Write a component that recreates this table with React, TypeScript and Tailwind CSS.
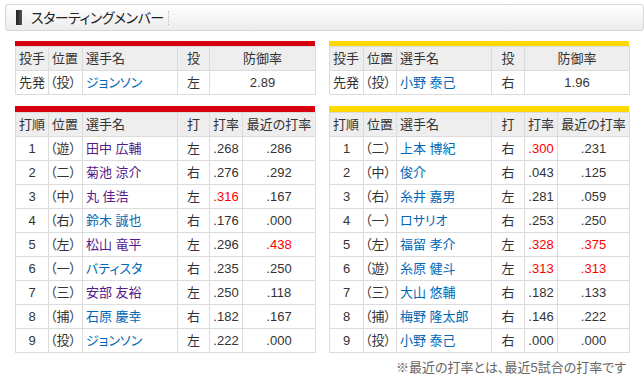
const FONT = "[font-family:'Liberation_Sans','Noto_Sans_CJK_JP',sans-serif] [font-feature-settings:'palt']";

type Batter = [string, string, string, string, string, string, boolean, boolean, boolean];

// order, pos, name, hand, avg, recent, avgRed, recentRed, visited
const carp: Batter[] = [
  ['1', '（遊）', '田中 広輔', '左', '.268', '.286', false, false, true],
  ['2', '（二）', '菊池 涼介', '右', '.276', '.292', false, false, true],
  ['3', '（中）', '丸 佳浩', '左', '.316', '.167', true, false, true],
  ['4', '（右）', '鈴木 誠也', '右', '.176', '.000', false, false, false],
  ['5', '（左）', '松山 竜平', '左', '.296', '.438', false, true, true],
  ['6', '（一）', 'バティスタ', '右', '.235', '.250', false, false, false],
  ['7', '（三）', '安部 友裕', '左', '.250', '.118', false, false, true],
  ['8', '（捕）', '石原 慶幸', '右', '.182', '.167', false, false, false],
  ['9', '（投）', 'ジョンソン', '左', '.222', '.000', false, false, false],
];

const tigers: Batter[] = [
  ['1', '（二）', '上本 博紀', '右', '.300', '.231', true, false, false],
  ['2', '（中）', '俊介', '右', '.043', '.125', false, false, false],
  ['3', '（右）', '糸井 嘉男', '左', '.281', '.059', false, false, false],
  ['4', '（一）', 'ロサリオ', '右', '.253', '.250', false, false, false],
  ['5', '（左）', '福留 孝介', '左', '.328', '.375', true, true, false],
  ['6', '（遊）', '糸原 健斗', '左', '.313', '.313', true, true, false],
  ['7', '（三）', '大山 悠輔', '右', '.182', '.133', false, false, false],
  ['8', '（捕）', '梅野 隆太郎', '右', '.146', '.222', false, false, false],
  ['9', '（投）', '小野 泰己', '右', '.000', '.000', false, false, false],
];

const th = 'border border-[#dcdcdc] bg-[#eeeeee] h-[24px] px-[3px] font-normal text-left';
const td = 'border border-[#dcdcdc] bg-white h-[24px] px-[3px]';

function PitcherTable({ bar, cols, name, hand, era }: { bar: string; cols: number[]; name: string; hand: string; era: string }) {
  return (
    <div className="w-[300px]">
      <div className={`h-[5px] ${bar}`} />
      <table className="w-full table-fixed border-collapse">
        <colgroup>
          {cols.map((w, i) => (
            <col key={i} style={{ width: w }} />
          ))}
        </colgroup>
        <thead>
          <tr>
            <th className={th}>投手</th>
            <th className={th}>位置</th>
            <th className={th}>選手名</th>
            <th className={`${th} !text-center`}>投</th>
            <th className={`${th} !text-center`}>防御率</th>
          </tr>
        </thead>
        <tbody>
          <tr>
            <td className={td}>先発</td>
            <td className={`${td} !px-[1px]`}>（投）</td>
            <td className={`${td} text-[#0068b7]`}>{name}</td>
            <td className={`${td} text-center`}>{hand}</td>
            <td className={`${td} text-center`}>{era}</td>
          </tr>
        </tbody>
      </table>
    </div>
  );
}

function BattingTable({ bar, cols, rows }: { bar: string; cols: number[]; rows: Batter[] }) {
  return (
    <div className="w-[300px]">
      <div className={`h-[6px] ${bar}`} />
      <table className="w-full table-fixed border-collapse">
        <colgroup>
          {cols.map((w, i) => (
            <col key={i} style={{ width: w }} />
          ))}
        </colgroup>
        <thead>
          <tr>
            <th className={th}>打順</th>
            <th className={th}>位置</th>
            <th className={th}>選手名</th>
            <th className={`${th} !text-center`}>打</th>
            <th className={`${th} !text-center`}>打率</th>
            <th className={`${th} !text-center`}>最近の打率</th>
          </tr>
        </thead>
        <tbody>
          {rows.map((r) => (
            <tr key={r[0]}>
              <td className={`${td} text-center`}>{r[0]}</td>
              <td className={`${td} !px-[1px]`}>{r[1]}</td>
              <td className={`${td} ${r[8] ? 'text-[#551a8b]' : 'text-[#0068b7]'}`}>{r[2]}</td>
              <td className={`${td} text-center`}>{r[3]}</td>
              <td className={`${td} text-center ${r[6] ? 'text-[#ff0000]' : ''}`}>{r[4]}</td>
              <td className={`${td} text-center ${r[7] ? 'text-[#ff0000]' : ''}`}>{r[5]}</td>
            </tr>
          ))}
        </tbody>
      </table>
    </div>
  );
}

export default function App() {
  return (
    <div className={`w-[644px] h-[381px] bg-white text-[13px] leading-none text-[#333333] ${FONT} pt-[4px]`}>
      {/* title */}
      <div className="ml-[5px] h-[27px] flex items-center rounded-[3px] border border-[#d6d6d6] bg-gradient-to-b from-white to-[#ececec]">
        <span className="ml-[10px] w-[6px] h-[15px] bg-gradient-to-r from-[#222222] to-[#555555]" />
        <span className="ml-[9px] text-[14px] tracking-[-0.5px] text-[#222222]">スターティングメンバー</span>
        <span className="ml-[4px] h-[14px] border-l border-dotted border-[#bbbbbb]" />
      </div>

      <div className="pl-[15px] mt-[10px] flex gap-[14px]">
        <PitcherTable bar="bg-[#d7000f]" cols={[33, 34, 95, 32, 106]} name="ジョンソン" hand="左" era="2.89" />
        <PitcherTable bar="bg-[#ffd800]" cols={[34, 33, 95, 33, 105]} name="小野 泰己" hand="右" era="1.96" />
      </div>

      <div className="pl-[15px] mt-[11px] flex gap-[14px]">
        <BattingTable bar="bg-[#d7000f]" cols={[33, 34, 95, 32, 33, 73]} rows={carp} />
        <BattingTable bar="bg-[#ffd800]" cols={[34, 33, 95, 33, 33, 72]} rows={tigers} />
      </div>

      <div className="w-[626px] mt-[8px] text-right text-[#666666]">※最近の打率とは、最近5試合の打率です</div>
    </div>
  );
}
